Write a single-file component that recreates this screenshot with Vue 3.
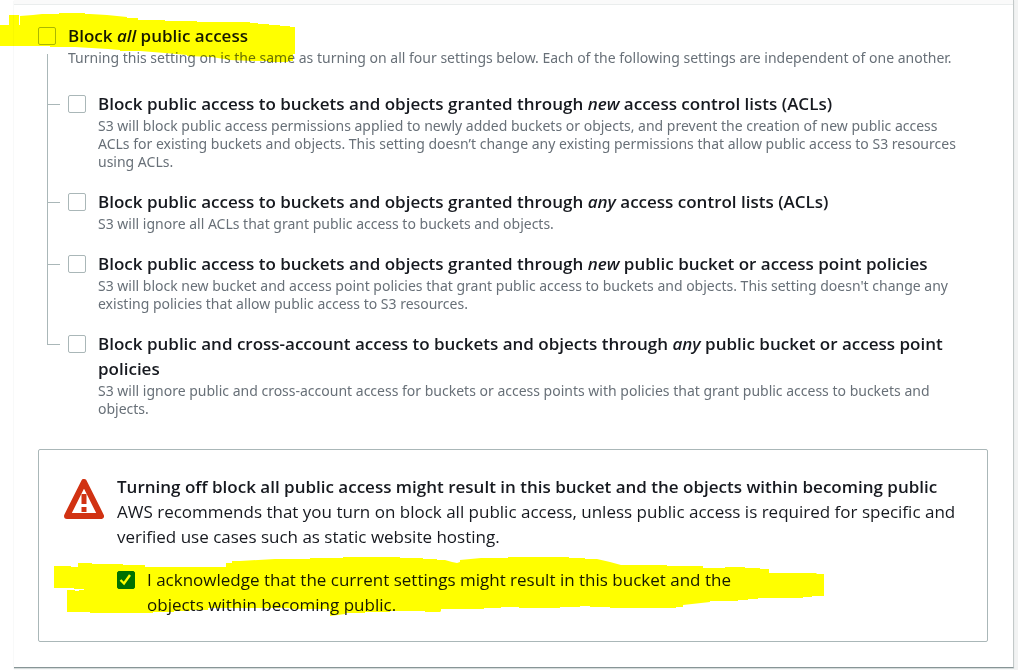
<script setup>
import { ref } from 'vue'

const blockAll = ref(false)
const acknowledged = ref(true)

const settings = ref([
  {
    id: 'new-acls',
    before: 'Block public access to buckets and objects granted through ',
    emphasis: 'new',
    after: ' access control lists (ACLs)',
    description: [
      'S3 will block public access permissions applied to newly added buckets or objects, and prevent the creation of new public access',
      'ACLs for existing buckets and objects. This setting doesn’t change any existing permissions that allow public access to S3 resources',
      'using ACLs.',
    ],
    checked: false,
  },
  {
    id: 'any-acls',
    before: 'Block public access to buckets and objects granted through ',
    emphasis: 'any',
    after: ' access control lists (ACLs)',
    description: ['S3 will ignore all ACLs that grant public access to buckets and objects.'],
    checked: false,
  },
  {
    id: 'new-policies',
    before: 'Block public access to buckets and objects granted through ',
    emphasis: 'new',
    after: ' public bucket or access point policies',
    description: [
      "S3 will block new bucket and access point policies that grant public access to buckets and objects. This setting doesn't change any",
      'existing policies that allow public access to S3 resources.',
    ],
    checked: false,
  },
  {
    id: 'any-policies',
    before: 'Block public and cross-account access to buckets and objects through ',
    emphasis: 'any',
    after: ' public bucket or access point policies',
    description: [
      'S3 will ignore public and cross-account access for buckets or access points with policies that grant public access to buckets and',
      'objects.',
    ],
    checked: false,
  },
])
</script>

<template>
  <main class="page">
    <section class="panel">
      <div class="panel-header"></div>
      <div class="panel-body">
        <div class="option">
          <input id="block-all" v-model="blockAll" class="check" type="checkbox" aria-describedby="block-all-desc" />
          <div class="copy">
            <label class="title" for="block-all">Block <em>all</em> public access</label>
            <p id="block-all-desc" class="description">
              Turning this setting on is the same as turning on all four settings below. Each of the following settings are independent of one another.
            </p>
          </div>
        </div>

        <ul class="tree">
          <li v-for="item in settings" :key="item.id" class="option branch">
            <input :id="item.id" v-model="item.checked" class="check" type="checkbox" :aria-describedby="item.id + '-desc'" />
            <div class="copy">
              <label class="title" :for="item.id">{{ item.before }}<em>{{ item.emphasis }}</em>{{ item.after }}</label>
              <p :id="item.id + '-desc'" class="description">{{ item.description.join('\n') }}</p>
            </div>
          </li>
        </ul>

        <div class="alert">
          <svg class="warning" viewBox="0 0 40 40" aria-hidden="true">
            <path d="M20 3 L37 37 H3 Z" fill="none" stroke="#d13212" stroke-width="6" stroke-linejoin="round" />
            <path d="M20 15 V25 M20 28 V33" fill="none" stroke="#d13212" stroke-width="5" />
          </svg>
          <div class="alert-copy">
            <strong class="title">Turning off block all public access might result in this bucket and the objects within becoming public</strong>
            <p class="alert-text">
              AWS recommends that you turn on block all public access, unless public access is required for specific and verified use cases such as static website hosting.
            </p>
            <div class="acknowledge">
              <input id="ack" v-model="acknowledged" class="check" type="checkbox" />
              <label class="ack-label" for="ack">I acknowledge that the current settings might result in this bucket and the objects within becoming public.</label>
            </div>
          </div>
          <svg class="marker marker-bottom" viewBox="54 557 770 60" aria-hidden="true">
            <path d="M54 566H71V567H78V563H92V564H123V565H145V567H226V563H232V561H240L275 559H310V558H343V557H400V558H423V559H437V560H445L452 562L457 563L460 562V560L481 558H508V557H569V558H585V559H597L610 562L621 565H667V566H703V568H725V567H745V568H760V569H769V573H816L817 574H824V596H812V597H803V598H758V599H748V600H738V601H710V602L683 605V607H676V608H610V607H590V606H580V607H560V608H519V607H501V608H484V609H441V611L440 612H425V611H390V612H365V613H345V614L330 616V609H290V608H208V610H190V611H174V612H153V613H90V612H67V590H75V591H79V590H84V589H74V588H54Z" fill="#ff0" />
          </svg>
        </div>
      </div>
      <svg class="marker marker-top" viewBox="0 13 296 50" aria-hidden="true">
        <path d="M0 25H9V15H19V25H20V16L33 15L42 14H59V13H85V14H90L107 15L127 17V18H138V20H165V21H197V22H250V23H258V24H269V25H280V26H290V27H295V54H293V61H288V62H268V61H252L230 60L212 57L187 56V55L165 53L140 51H120V50L108 49L75 47H50V46H0Z" fill="#ff0" />
      </svg>
    </section>
  </main>
</template>

<style>
body {
  margin: 0;
  background: #fff;
}
</style>

<style scoped>
.page {
  display: flow-root;
  padding-right: 4px;
  background: linear-gradient(to left, #f2f3f3 4px, #fff 4px);
  font-family: "Open Sans", "Noto Sans", sans-serif;
  color: #16191f;
}

.panel {
  position: relative;
  margin: 0 0 2px 14px;
  background: #fff;
  border-right: 1px solid #c3c9c9;
  border-bottom: 1px solid #879596;
  box-shadow: 0 1px 1px #d5dbdb;
  box-sizing: border-box;
}

.panel-header {
  height: 4px;
  background: #fafafa;
  border-bottom: 1px solid #eaeded;
}

.panel-body {
  padding: 18px 25px 25px 24px;
}

.option {
  display: flex;
  align-items: flex-start;
  gap: 12px;
}

.copy {
  flex: 1;
  min-width: 0;
}

.check {
  appearance: none;
  flex: none;
  box-sizing: border-box;
  width: 18px;
  height: 18px;
  margin: 4px 0 0;
  border: 1px solid #aab7b8;
  border-radius: 2px;
  background: #fff;
}

.title {
  display: block;
  font-size: 17px;
  font-weight: 600;
  line-height: 25px;
}

.description {
  margin: 1px 0 0;
  font-family: "Noto Sans", "Open Sans", sans-serif;
  font-size: 14px;
  line-height: 18px;
  color: #687078;
}

.tree {
  list-style: none;
  margin: 24px 0 0;
  padding: 0 0 0 30px;
  display: flex;
  flex-direction: column;
  gap: 18px;
}

.tree .description {
  white-space: pre-line;
}

.branch {
  position: relative;
}

.branch::before {
  content: "";
  position: absolute;
  left: -21px;
  top: -5px;
  width: 12px;
  height: 18px;
  border-left: 1px solid #aab7b8;
  border-bottom: 1px solid #aab7b8;
}

.branch:first-child::before {
  top: -37px;
  height: 50px;
}

.branch:not(:last-child)::after {
  content: "";
  position: absolute;
  left: -21px;
  top: 13px;
  bottom: -18px;
  border-left: 1px solid #aab7b8;
}

.alert {
  position: relative;
  display: flex;
  align-items: flex-start;
  gap: 13px;
  margin-top: 31px;
  padding: 24px 25px;
  border: 1px solid #aab7b8;
  border-radius: 2px;
}

.warning {
  flex: none;
  width: 40px;
  height: 40px;
  margin-top: 5px;
}

.alert-copy {
  flex: 1;
  min-width: 0;
}

.alert-text {
  margin: 0;
  font-size: 17px;
  line-height: 25px;
}

.acknowledge {
  display: flex;
  align-items: flex-start;
  gap: 12px;
  margin-top: 18px;
}

.check:checked {
  border-color: #007000;
  background: #007000 url("data:image/svg+xml,%3Csvg xmlns='http://www.w3.org/2000/svg' viewBox='0 0 18 18'%3E%3Cpath d='M3.5 9 L7 12.5 L13 4' fill='none' stroke='%23fff' stroke-width='2.4'/%3E%3C/svg%3E") border-box;
}

.ack-label {
  max-width: 620px;
  font-size: 17px;
  line-height: 25px;
}

.marker {
  position: absolute;
  mix-blend-mode: multiply;
  pointer-events: none;
}

.marker-top {
  left: -14px;
  top: 13px;
  width: 296px;
  height: 50px;
}

.marker-bottom {
  left: 15px;
  top: 107px;
  width: 770px;
  height: 60px;
}
</style>
